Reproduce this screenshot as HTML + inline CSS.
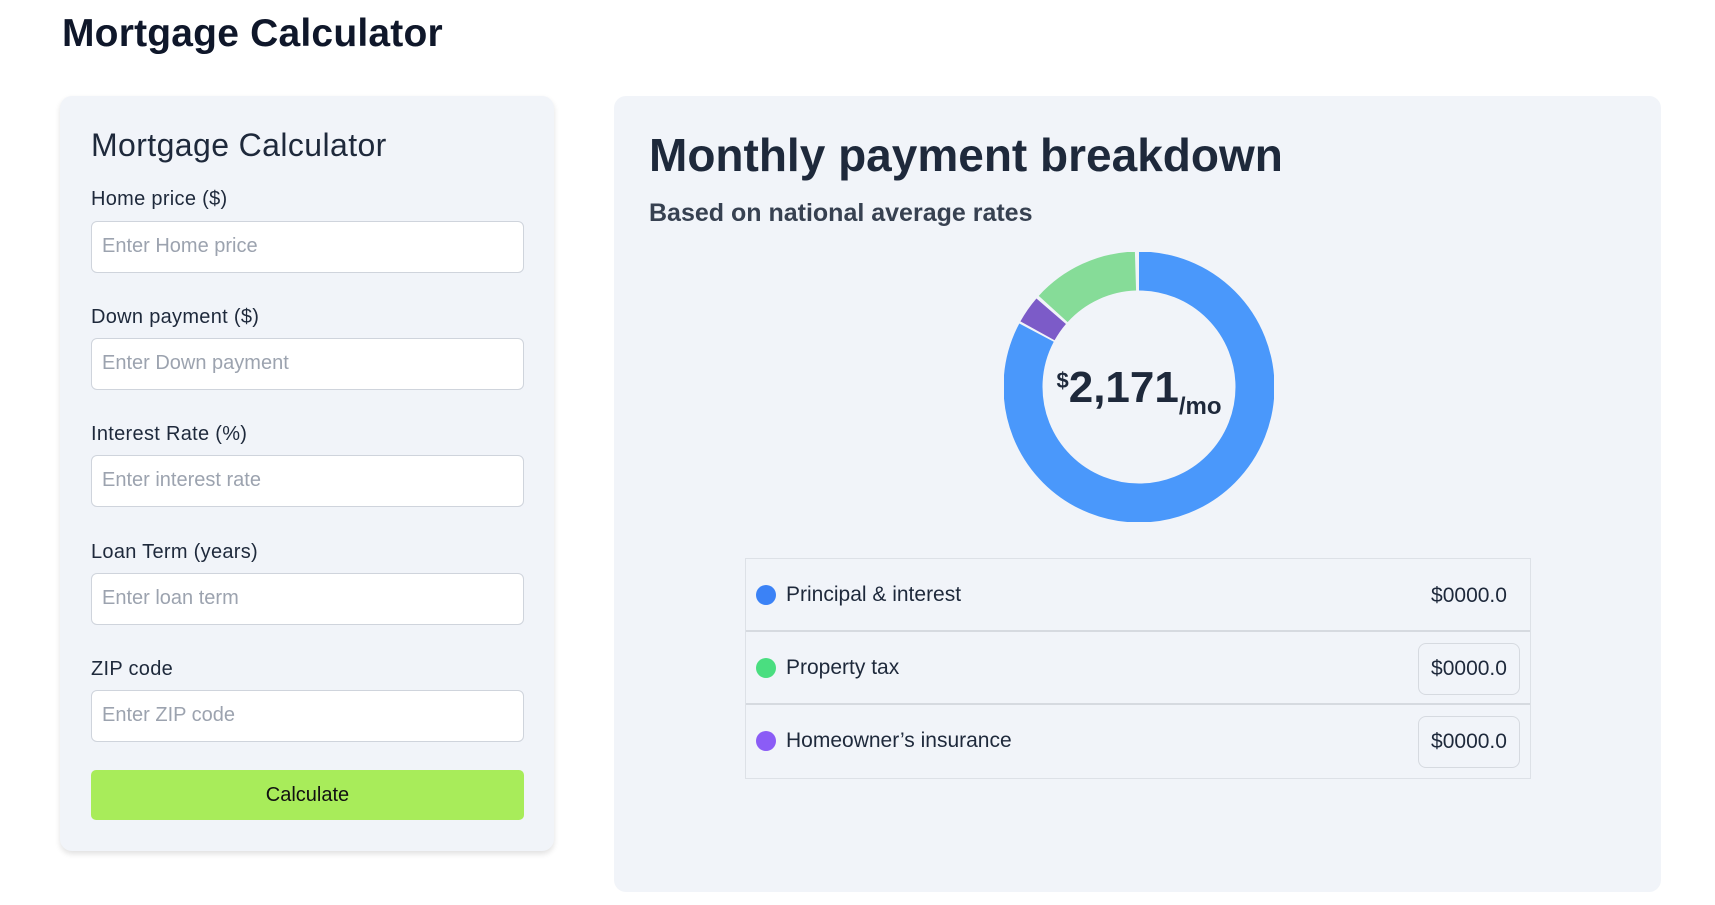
<!DOCTYPE html>
<html><head><meta charset="utf-8"><style>
*{box-sizing:border-box;margin:0;padding:0}
body{width:1715px;height:905px;background:#fff;font-family:"Liberation Sans",sans-serif;color:#0f172a;position:relative;overflow:hidden}
h1{position:absolute;left:62px;top:12px;font-size:39px;font-weight:700;letter-spacing:0.2px}
.card{position:absolute;background:#f1f4f9;border-radius:12px}
.left{left:60px;top:96px;width:494px;height:755px;box-shadow:0 3px 6px rgba(0,0,0,0.12)}
.left h2{position:absolute;left:31px;top:31px;font-size:32px;font-weight:400;color:#1e293b;letter-spacing:0.4px}
.lab{position:absolute;left:31px;font-size:20px;color:#1e293b;letter-spacing:0.3px}
.inp{position:absolute;left:31px;width:433px;height:52px;background:#fff;border:1px solid #cfd4dc;border-radius:6px;font-size:20px;color:#9ca3af;padding:13px 10px}
.btn{position:absolute;left:31px;top:674px;width:433px;height:50px;background:#a8ec5a;border-radius:5px;font-size:20px;text-align:center;line-height:50px;color:#111}
.right{left:614px;top:96px;width:1047px;height:796px}
.right h2{position:absolute;left:35px;top:32px;font-size:46px;font-weight:700;color:#1e293b}
.right h3{position:absolute;left:35px;top:103px;font-size:25px;font-weight:700;color:#374151}
.tbl{position:absolute;left:131px;top:462px;width:786px;border:1px solid #dde1e7}
.row{height:73px;border-bottom:2px solid #d6dae0;position:relative;font-size:21px;color:#1e293b}
.row:last-child{border-bottom:none}
.dot{position:absolute;left:10px;top:26px;width:20px;height:20px;border-radius:50%}
.nm{position:absolute;left:40px;top:24px}
.val{position:absolute;right:10px;top:11px;width:102px;height:52px;border:1px solid #d6dae0;border-radius:8px;text-align:center;line-height:50px}
.val.nb{border-color:transparent}
</style></head><body>
<h1>Mortgage Calculator</h1>
<div class="card left">
<h2>Mortgage Calculator</h2>
<div class="lab" style="top:92px">Home price ($)</div><div class="inp" style="top:125px">Enter Home price</div>
<div class="lab" style="top:210px">Down payment ($)</div><div class="inp" style="top:242px">Enter Down payment</div>
<div class="lab" style="top:327px">Interest Rate (%)</div><div class="inp" style="top:359px">Enter interest rate</div>
<div class="lab" style="top:445px">Loan Term (years)</div><div class="inp" style="top:477px">Enter loan term</div>
<div class="lab" style="top:562px">ZIP code</div><div class="inp" style="top:594px">Enter ZIP code</div>
<div class="btn">Calculate</div>
</div>
<div class="card right">
<h2>Monthly payment breakdown</h2>
<h3>Based on national average rates</h3>
<svg style="position:absolute;left:390px;top:156px" width="270" height="270" viewBox="0 0 270 270">
<g transform="rotate(-90 135 135)" fill="none" stroke-width="39">
<circle cx="135" cy="135" r="116" stroke="#4a98fb" stroke-dasharray="603 1000" stroke-dashoffset="0"/>
<circle cx="135" cy="135" r="116" stroke="#7c5bc8" stroke-dasharray="24 1000" stroke-dashoffset="-605"/>
<circle cx="135" cy="135" r="116" stroke="#86dc98" stroke-dasharray="93 1000" stroke-dashoffset="-632"/>
</g>
<text x="135" y="150" text-anchor="middle" font-family="Liberation Sans" fill="#1e293b"><tspan font-size="22" font-weight="700" dy="-14">$</tspan><tspan font-size="44" font-weight="700" dy="14">2,171</tspan><tspan font-size="24" font-weight="700" dy="12">/mo</tspan></text>
</svg>
<div class="tbl">
<div class="row"><div class="dot" style="background:#3b82f6"></div><div class="nm">Principal &amp; interest</div><div class="val nb">$0000.0</div></div>
<div class="row"><div class="dot" style="background:#4ade80"></div><div class="nm">Property tax</div><div class="val">$0000.0</div></div>
<div class="row"><div class="dot" style="background:#8b5cf6"></div><div class="nm">Homeowner’s insurance</div><div class="val">$0000.0</div></div>
</div>
</div>
</body></html>
